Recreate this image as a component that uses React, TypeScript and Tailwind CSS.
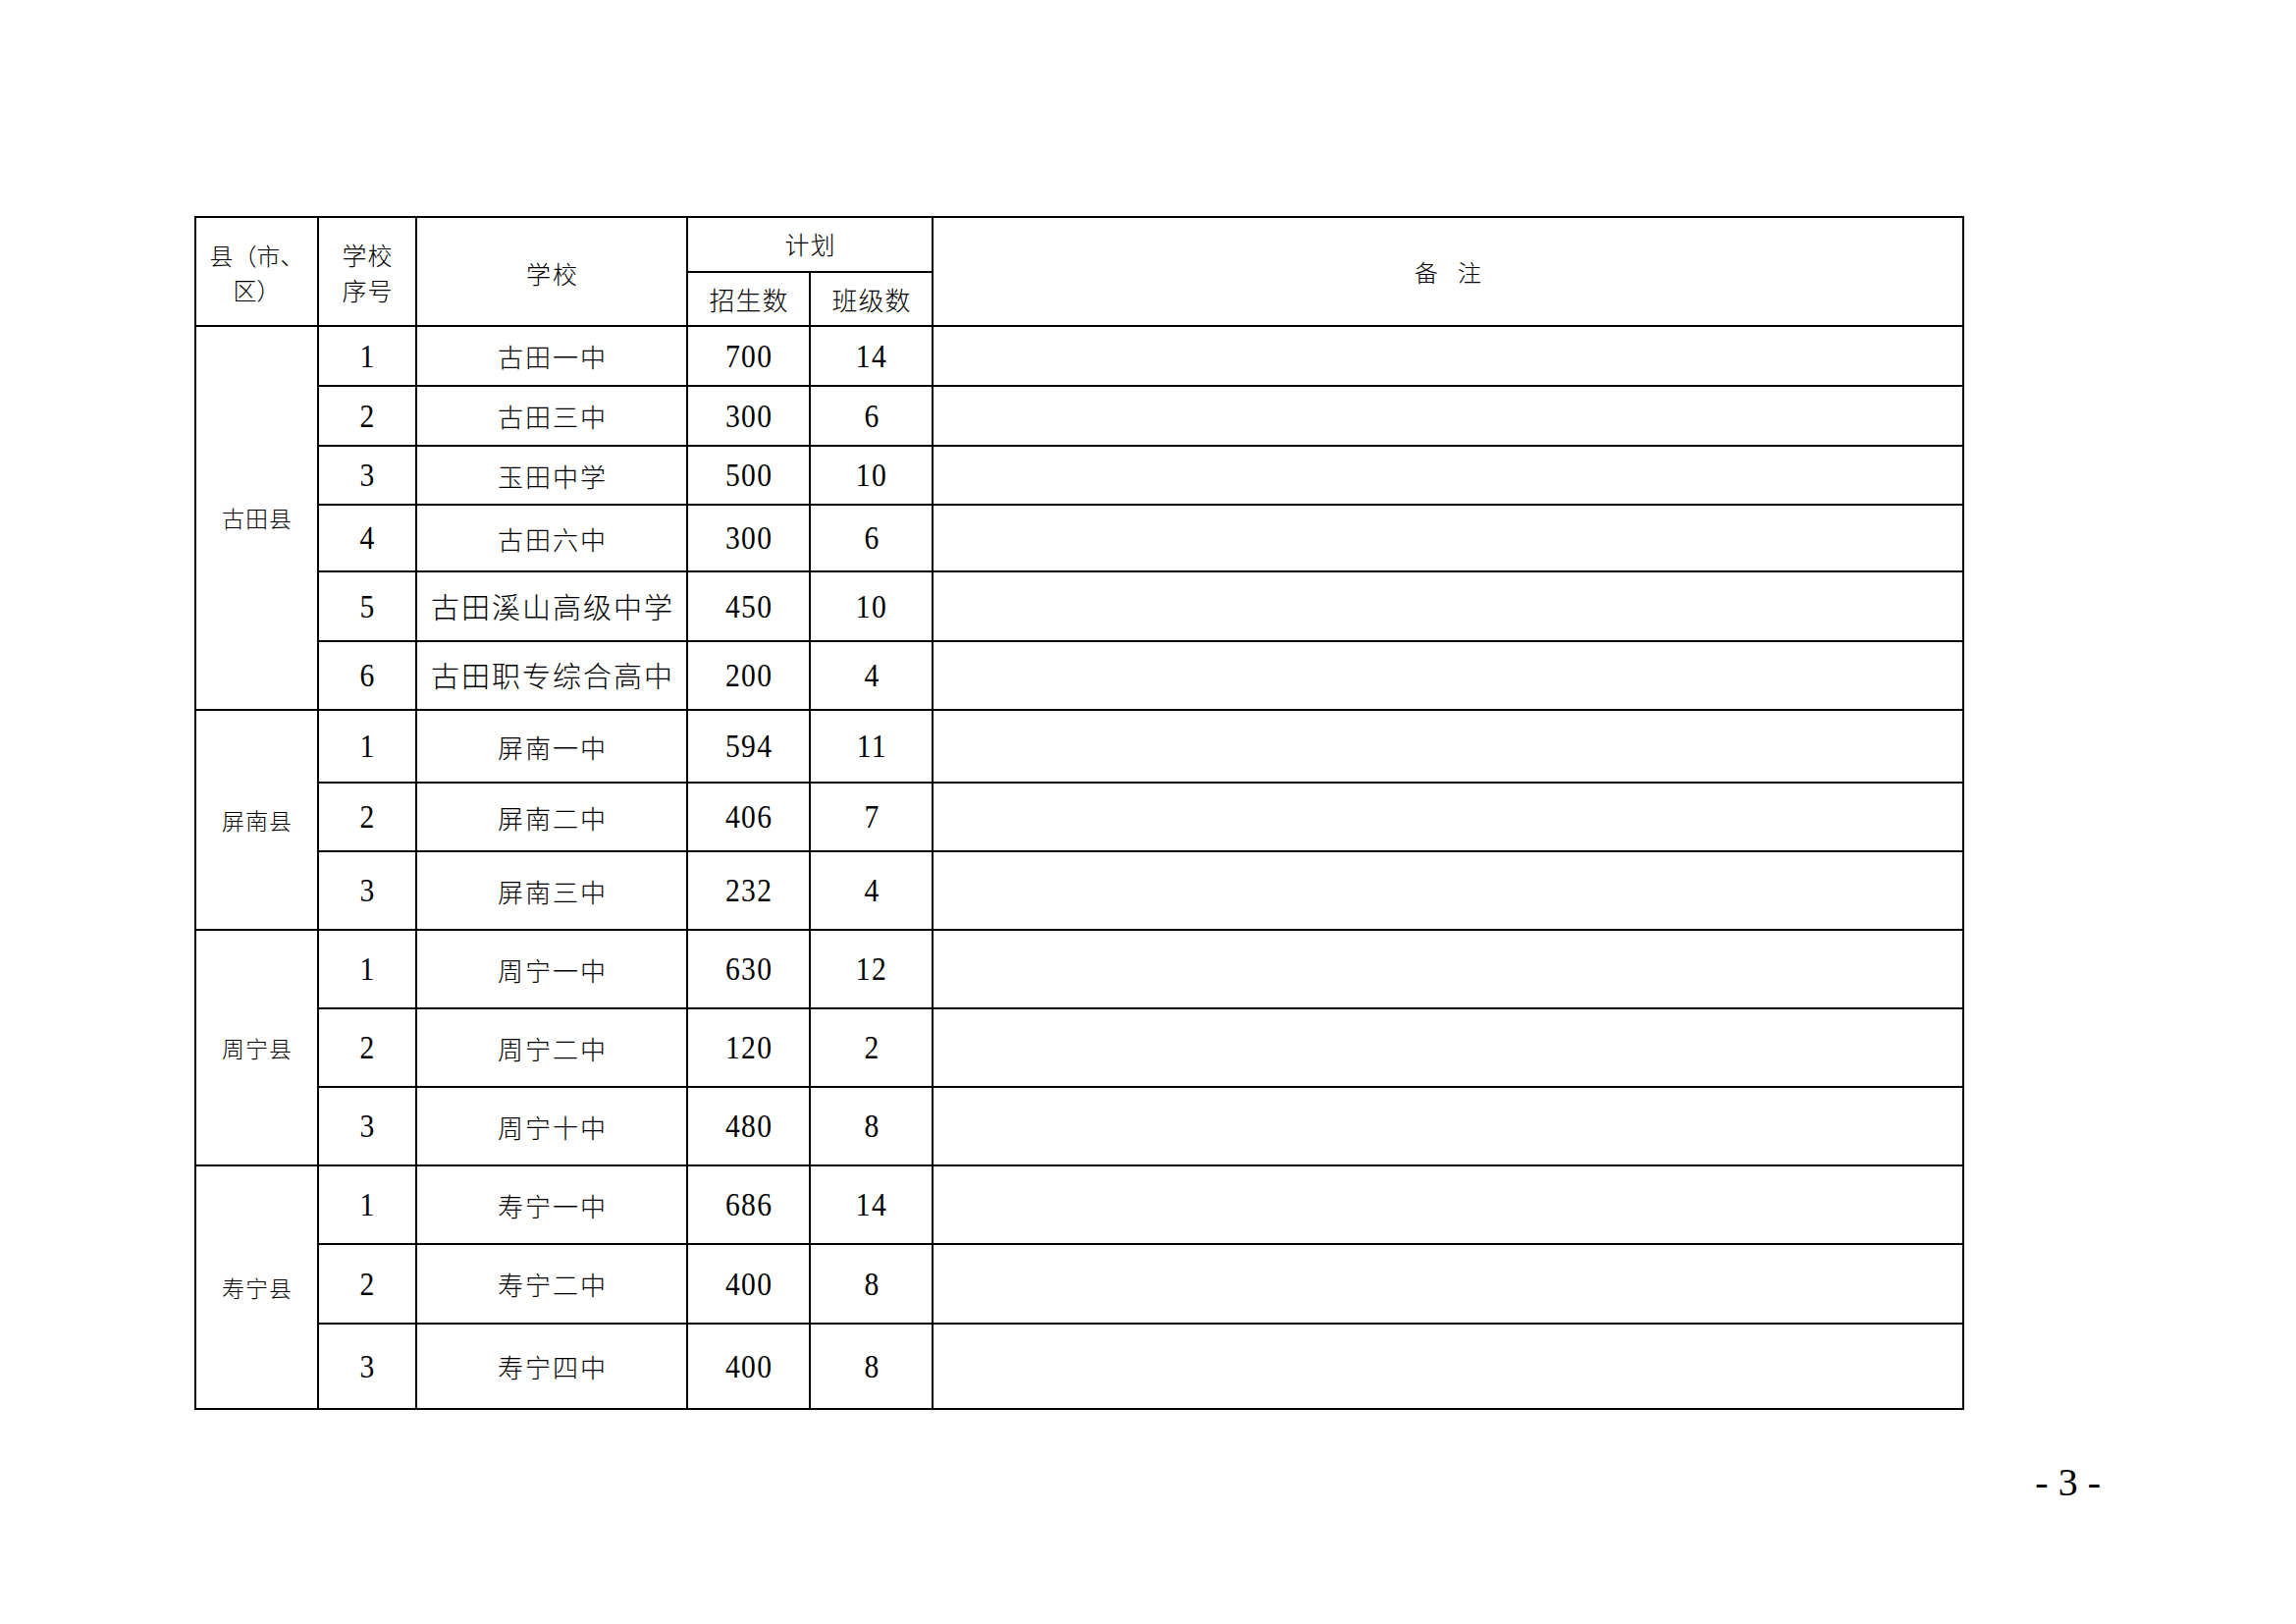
import type { ReactNode } from 'react';

type School = [number, string, number, number];

const GROUPS: { county: string; span: string; rows: School[] }[] = [
  {
    county: '古田县',
    span: 'row-span-6',
    rows: [
      [1, '古田一中', 700, 14],
      [2, '古田三中', 300, 6],
      [3, '玉田中学', 500, 10],
      [4, '古田六中', 300, 6],
      [5, '古田溪山高级中学', 450, 10],
      [6, '古田职专综合高中', 200, 4],
    ],
  },
  {
    county: '屏南县',
    span: 'row-span-3',
    rows: [
      [1, '屏南一中', 594, 11],
      [2, '屏南二中', 406, 7],
      [3, '屏南三中', 232, 4],
    ],
  },
  {
    county: '周宁县',
    span: 'row-span-3',
    rows: [
      [1, '周宁一中', 630, 12],
      [2, '周宁二中', 120, 2],
      [3, '周宁十中', 480, 8],
    ],
  },
  {
    county: '寿宁县',
    span: 'row-span-3',
    rows: [
      [1, '寿宁一中', 686, 14],
      [2, '寿宁二中', 400, 8],
      [3, '寿宁四中', 400, 8],
    ],
  },
];

const CJK = "font-['Noto_Sans_CJK_SC','Noto_Sans_CJK_JP',sans-serif] font-light text-black";
// numbers in the source are a slightly condensed Times
const NUM =
  "inline-block scale-x-[0.87] font-['Liberation_Serif','Times_New_Roman',serif] text-[34px] leading-none tracking-[1.5px] pl-[1.5px] text-black";

function Cell({ className = '', children }: { className?: string; children?: ReactNode }) {
  return <div className={`bg-white flex items-center justify-center ${className}`}>{children}</div>;
}

export default function App() {
  return (
    <div className="w-[2339px] h-[1654px] bg-white pt-[220px] pl-[198px]">
      {/* Table: black grid showing through 2px gaps forms the rules */}
      <div className="w-fit bg-black p-[2px] grid gap-[2px] grid-cols-[123px_98px_274px_123px_123px_1048px] grid-rows-[54px_53px_59px_59px_58px_66px_69px_68px_72px_68px_78px_78px_78px_78px_78px_79px_85px]">
        {/* header */}
        <Cell className="row-span-2">
          <div className={`${CJK} text-[24px] leading-[35px] text-center`}>
            县（市、<br />区）
          </div>
        </Cell>
        <Cell className="row-span-2">
          <div className={`${CJK} text-[25px] leading-[36px] tracking-[1px] pl-[1px] text-center`}>
            学校<br />序号
          </div>
        </Cell>
        <Cell className="row-span-2">
          <span className={`${CJK} text-[25px] tracking-[2px] pl-[2px] pt-[4px]`}>学校</span>
        </Cell>
        <Cell className="col-span-2">
          <span className={`${CJK} text-[25px] tracking-[1px] pl-[1px]`}>计划</span>
        </Cell>
        <Cell className="row-span-2">
          <div className={`${CJK} text-[24px] flex gap-[20px]`}>
            <span>备</span>
            <span>注</span>
          </div>
        </Cell>
        <Cell>
          <span className={`${CJK} text-[26px] tracking-[1px] pl-[1px]`}>招生数</span>
        </Cell>
        <Cell>
          <span className={`${CJK} text-[26px] tracking-[1px] pl-[1px]`}>班级数</span>
        </Cell>

        {/* body */}
        {GROUPS.map(g => [
          <Cell key={g.county} className={g.span}>
            <span className={`${CJK} text-[23px] tracking-[1px] pl-[1px]`}>{g.county}</span>
          </Cell>,
          ...g.rows.flatMap(([no, name, count, classes]) => [
            <Cell key={`${g.county}-${no}-n`}>
              <span className={NUM}>{no}</span>
            </Cell>,
            <Cell key={`${g.county}-${no}-s`}>
              {name.length > 4 ? (
                <span className={`${CJK} text-[29px] tracking-[2px] pl-[2px]`}>{name}</span>
              ) : (
                <span className={`${CJK} text-[26px] tracking-[2px] pl-[2px]`}>{name}</span>
              )}
            </Cell>,
            <Cell key={`${g.county}-${no}-c`}>
              <span className={NUM}>{count}</span>
            </Cell>,
            <Cell key={`${g.county}-${no}-k`}>
              <span className={NUM}>{classes}</span>
            </Cell>,
            <Cell key={`${g.county}-${no}-r`} />,
          ]),
        ])}
      </div>

      {/* page number */}
      <div className="flex justify-end pr-[199px] mt-[51px]">
        <span className="font-['Liberation_Serif','Times_New_Roman',serif] text-[40px] leading-[46px] text-black whitespace-pre">
          - 3 -
        </span>
      </div>
    </div>
  );
}
